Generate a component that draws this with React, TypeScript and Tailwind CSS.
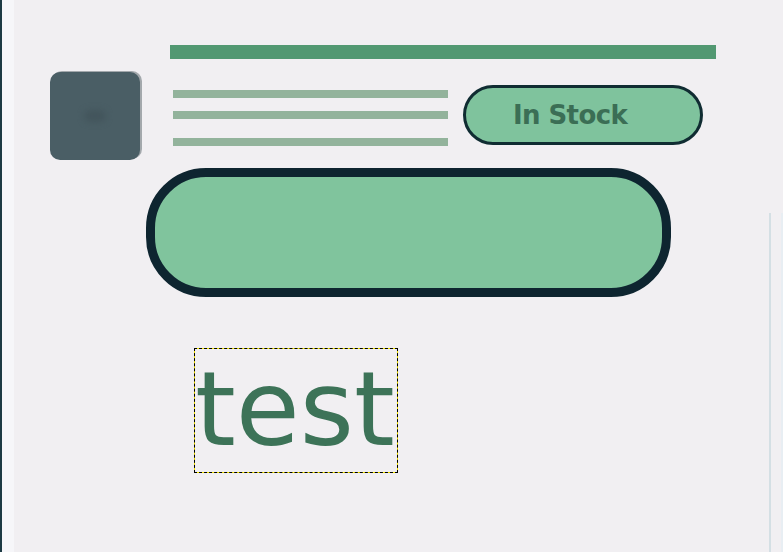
export default function App() {
  return (
    <div className="flex h-[552px] w-[783px] overflow-hidden bg-[#f1eff2] font-['DejaVu_Sans',sans-serif]">
      {/* left edge */}
      <div className="w-[14px] shrink-0 border-l-2 border-[#1d3a44] bg-[#f6f6f9]" />

      {/* main */}
      <div className="flex-1">
        {/* top row */}
        <div className="flex items-start pt-[45px]">
          <div className="ml-[36px] mt-[27px] flex h-[88px] w-[90px] shrink-0 items-center justify-center rounded-[10px] bg-[#4a5e65] shadow-[2px_-1px_0_#a3a8ac]">
            <div className="h-[12px] w-[22px] rounded-full bg-[#43555c] blur-[3px]" />
          </div>

          <div className="ml-[30px] w-[546px]">
            <div className="h-[14px] w-full bg-[#529872]" />

            <div className="mt-[26px] flex items-start">
              <div className="ml-[3px] mt-[5px] flex w-[275px] flex-col">
                <div className="h-[8px] bg-[#93b39c]" />
                <div className="mt-[13px] h-[8px] bg-[#93b39c]" />
                <div className="mt-[19px] h-[8px] bg-[#93b39c]" />
              </div>

              <div className="ml-[15px] flex h-[60px] w-[240px] items-center rounded-full border-[3px] border-[#102c32] bg-[#7fc39d] pl-[47px]">
                <span className="text-[26px] font-bold leading-none tracking-[-0.6px] text-[#3b6e55]">
                  In Stock
                </span>
              </div>
            </div>
          </div>
        </div>

        {/* big button */}
        <div className="ml-[132px] mt-[8px] h-[129px] w-[525px] rounded-[60px] border-[9px] border-[#0e2530] bg-[#80c49d]" />

        {/* text selection */}
        <div className="ml-[180px] mt-[51px] w-[204px] border border-dashed border-black bg-[#f5e500]">
          <div className="h-[123px] bg-[#f1eff2] pt-[8px] text-[104px] leading-none text-[#3d7358]">
            test
          </div>
        </div>
      </div>

      {/* right edge */}
      <div className="flex w-[15px] shrink-0 pt-[213px]">
        <div className="ml-[1px] w-[2px] bg-[#d4dfe4]" />
        <div className="ml-auto w-[2px] bg-[#e8eef3]" />
      </div>
    </div>
  );
}
